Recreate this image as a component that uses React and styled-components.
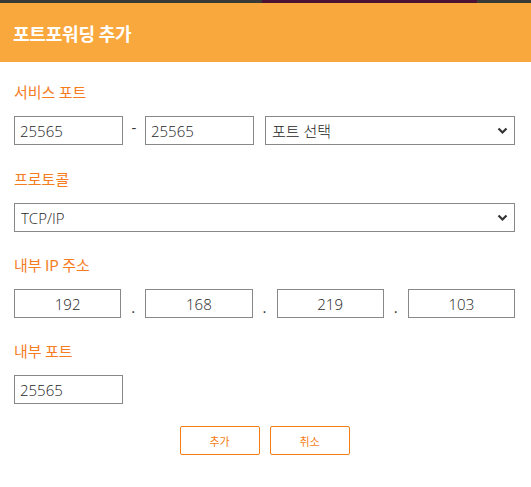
import React from "react";
import styled, { createGlobalStyle } from "styled-components";

const Global = createGlobalStyle`
  html, body {
    margin: 0;
    padding: 0;
    background: #fff;
  }
  body {
    font-family: "Noto Sans", "Noto Sans CJK KR", sans-serif;
  }
`;

const TopStrip = styled.div`
  display: flex;
  height: 3px;
  background: #373a37;
`;

const StripSeg = styled.div`
  width: ${(p) => p.w}px;
  background: ${(p) => p.color};
`;

const Header = styled.div`
  height: 59px;
  background: #f9a83d;
  display: flex;
  align-items: center;
  padding-left: 13px;
`;

const Title = styled.h1`
  margin: 0;
  color: #fff;
  font-family: "Noto Sans CJK KR", sans-serif;
  font-size: 18px;
  font-weight: 700;
  letter-spacing: -0.2px;
`;

const Body = styled.div`
  padding: 20px 16px 0 14px;
  display: flex;
  flex-direction: column;
`;

const Field = styled.div`
  margin-bottom: ${(p) => p.mb ?? 23}px;
`;

const Label = styled.div`
  color: #f57d1f;
  font-family: "Noto Sans CJK KR", sans-serif;
  font-size: 15px;
  font-weight: 400;
  height: 20px;
  line-height: 20px;
  margin-bottom: 14px;
`;

const Row = styled.div`
  display: flex;
  align-items: center;
`;

const Input = styled.input`
  box-sizing: border-box;
  width: ${(p) => (p.w ? `${p.w}px` : "auto")};
  flex: ${(p) => (p.w ? "none" : "1")};
  min-width: 0;
  height: 29px;
  border: 1px solid #888;
  border-radius: 0;
  padding: 0 5px;
  font-family: "Open Sans", "Noto Sans", sans-serif;
  font-size: 15px;
  font-weight: 300;
  color: #1e1e1e;
  text-align: ${(p) => (p.center ? "center" : "left")};
  outline: none;
`;

const Sep = styled.span`
  width: ${(p) => p.w}px;
  flex: none;
  text-align: center;
  color: #333;
  font-family: "Open Sans", sans-serif;
  font-size: 15px;
  align-self: ${(p) => (p.low ? "flex-end" : "center")};
  line-height: ${(p) => (p.low ? "22px" : "normal")};
  margin-top: ${(p) => (p.low ? "0" : "-8px")};
`;

const SelectWrap = styled.div`
  position: relative;
  flex: 1;
  margin-left: ${(p) => p.ml || 0}px;
`;

const Select = styled.select`
  appearance: none;
  box-sizing: border-box;
  width: 100%;
  height: 29px;
  border: 1px solid #888;
  border-radius: 0;
  background: #fff;
  padding: 0 24px 0 6px;
  font-family: "Open Sans", "Noto Sans CJK KR", sans-serif;
  font-size: 15px;
  font-weight: 300;
  color: #1e1e1e;
  outline: none;
`;

const Chevron = styled.svg`
  position: absolute;
  right: 7px;
  top: 11px;
  pointer-events: none;
`;

const Buttons = styled.div`
  display: flex;
  justify-content: center;
  gap: 10px;
  margin-top: -1px;
`;

const Button = styled.button`
  width: 80px;
  height: 29px;
  background: #fff;
  border: 1px solid #f47d14;
  border-radius: 2px;
  color: #f47d14;
  font-family: "Noto Sans CJK KR", sans-serif;
  font-size: 11px;
  cursor: pointer;
`;

const Arrow = () => (
  <Chevron width="11" height="8" viewBox="0 0 11 8">
    <path d="M1.5 1.5 L5.5 5.5 L9.5 1.5" fill="none" stroke="#333" strokeWidth="2.2" />
  </Chevron>
);

export default function App() {
  const ip = ["192", "168", "219", "103"];
  return (
    <>
      <Global />
      <TopStrip>
        <StripSeg w={262} color="#373a37" />
        <StripSeg w={215} color="#4b1234" />
      </TopStrip>
      <Header>
        <Title>포트포워딩 추가</Title>
      </Header>
      <Body>
        <Field mb={24}>
          <Label>서비스 포트</Label>
          <Row>
            <Input w={109} defaultValue="25565" />
            <Sep w={22}>-</Sep>
            <Input w={109} defaultValue="25565" />
            <SelectWrap ml={11}>
              <Select defaultValue="">
                <option value="">포트 선택</option>
              </Select>
              <Arrow />
            </SelectWrap>
          </Row>
        </Field>
        <Field>
          <Label>프로토콜</Label>
          <Row>
            <SelectWrap>
              <Select defaultValue="tcp">
                <option value="tcp">TCP/IP</option>
                <option value="udp">UDP</option>
              </Select>
              <Arrow />
            </SelectWrap>
          </Row>
        </Field>
        <Field>
          <Label>내부 IP 주소</Label>
          <Row>
            {ip.map((v, i) => (
              <React.Fragment key={i}>
                {i > 0 && (
                  <Sep w={24} low>
                    .
                  </Sep>
                )}
                <Input center defaultValue={v} />
              </React.Fragment>
            ))}
          </Row>
        </Field>
        <Field>
          <Label>내부 포트</Label>
          <Row>
            <Input w={109} defaultValue="25565" />
          </Row>
        </Field>
        <Buttons>
          <Button>추가</Button>
          <Button>취소</Button>
        </Buttons>
      </Body>
    </>
  );
}
